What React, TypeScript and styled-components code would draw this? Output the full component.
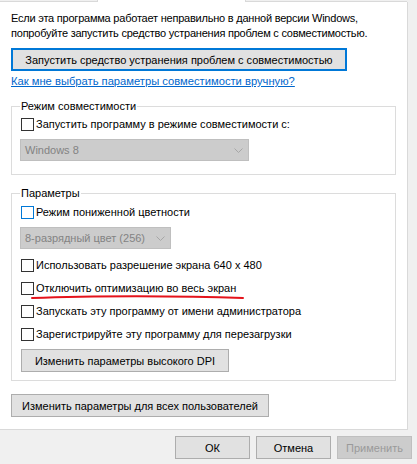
import styled, { createGlobalStyle } from "styled-components";

const Global = createGlobalStyle`
  html, body {
    margin: 0;
    padding: 0;
    background: #f0f0f0;
  }
  body {
    font-family: "Liberation Sans", "Noto Sans", sans-serif;
    font-size: 11px;
    color: #000;
    white-space: nowrap;
  }
`;

function Chevron() {
  return (
    <svg width="9" height="5" viewBox="0 0 9 5">
      <path d="M0.5 0.5 L4.5 4.5 L8.5 0.5" fill="none" stroke="#a6a6a6" strokeWidth="1" />
    </svg>
  );
}

function Check({ label, focus, marked }: { label: string; focus?: boolean; marked?: boolean }) {
  return (
    <CheckRow>
      <Box $focus={focus} />
      <CheckText>{label}</CheckText>
      {marked && (
        <RedMark width="214" height="6" viewBox="0 0 214 6">
          <path d="M1 4 C 60 1.5, 150 1.5, 212 4" fill="none" stroke="#e4131b" strokeWidth="2" strokeLinecap="round" />
        </RedMark>
      )}
    </CheckRow>
  );
}

export default function App() {
  return (
    <>
      <Global />
      <Dialog>
        <Tabs>
          <Tab $w={97} />
          <Tab $w={149} $active />
          <Tab $w={161} />
        </Tabs>
        <Panel>
          <Intro>
            Если эта программа работает неправильно в данной версии Windows,
            <br />
            попробуйте запустить средство устранения проблем с совместимостью.
          </Intro>
          <Button $default $w={336}>Запустить средство устранения проблем с совместимостью</Button>
          <HelpLink href="#">Как мне выбрать параметры совместимости вручную?</HelpLink>

          <Group $h={76} $top={10}>
            <Legend>Режим совместимости</Legend>
            <Check label="Запустить программу в режиме совместимости с:" />
            <Select $w={229}>
              Windows 8
              <Chevron />
            </Select>
          </Group>

          <Group $h={195} $top={11}>
            <Legend>Параметры</Legend>
            <Check label="Режим пониженной цветности" focus />
            <Select $w={151}>
              8-разрядный цвет (256)
              <Chevron />
            </Select>
            <Check label="Использовать разрешение экрана 640 x 480" />
            <Check label="Отключить оптимизацию во весь экран" marked />
            <Check label="Запускать эту программу от имени администратора" />
            <Check label="Зарегистрируйте эту программу для перезагрузки" />
            <Button $w={208}>Изменить параметры высокого DPI</Button>
          </Group>

          <AllUsers>
            <Button $w={258}>Изменить параметры для всех пользователей</Button>
          </AllUsers>
        </Panel>
        <Footer>
          <Button $w={75}>ОК</Button>
          <Button $w={75}>Отмена</Button>
          <Button $w={75} disabled>Применить</Button>
        </Footer>
      </Dialog>
    </>
  );
}

const Dialog = styled.div`
  width: 417px;
  height: 464px;
  display: flex;
  flex-direction: column;
  overflow: hidden;
`;

const Tabs = styled.div`
  display: flex;
  height: 2px;
`;

const Tab = styled.div<{ $w: number; $active?: boolean }>`
  width: ${(p) => p.$w}px;
  box-sizing: border-box;
  background: ${(p) => (p.$active ? "#fff" : "#f0f0f0")};
  border-bottom: ${(p) => (p.$active ? "none" : "1px solid #d9d9d9")};
  border-left: ${(p) => (p.$active ? "1px solid #d9d9d9" : "none")};
  border-right: ${(p) => (p.$active ? "1px solid #d9d9d9" : "none")};
`;

const Panel = styled.div`
  width: 408px;
  height: 428px;
  box-sizing: border-box;
  background: #fff;
  border-right: 1px solid #d9d9d9;
  border-bottom: 1px solid #d9d9d9;
  padding: 9px 12px 0 11px;
  display: flex;
  flex-direction: column;
  align-items: flex-start;
`;

const Intro = styled.p`
  margin: 0;
  line-height: 15px;
  letter-spacing: -0.22px;
`;

const Button = styled.button<{ $w: number; $default?: boolean }>`
  width: ${(p) => p.$w}px;
  height: 23px;
  box-sizing: border-box;
  margin: 0;
  padding: 0 4px;
  font: inherit;
  color: #000;
  background: #e1e1e1;
  border: ${(p) => (p.$default ? "2px solid #0078d7" : "1px solid #adadad")};
  border-radius: 0;
  text-align: center;
  white-space: nowrap;

  &:disabled {
    background: #cccccc;
    border-color: #bfbfbf;
    color: #9a9a9a;
  }

  ${Intro} + & {
    margin-top: 7px;
  }
`;

const HelpLink = styled.a`
  margin-top: 3px;
  color: #0066cc;
  line-height: 15px;
  font-size: 11.2px;
  text-decoration: underline;
`;

const Group = styled.fieldset<{ $h: number; $top: number }>`
  width: 385px;
  height: ${(p) => p.$h}px;
  box-sizing: border-box;
  margin: ${(p) => p.$top}px 0 0;
  padding: 3px 9px 0 9px;
  border: 1px solid #dcdcdc;
  display: flex;
  flex-direction: column;
  align-items: flex-start;
  gap: 8px;
  min-inline-size: 0;

  & + & {
    padding-top: 4px;
  }

  & > button {
    margin-top: -1px;
  }
`;

const Legend = styled.legend`
  padding: 0 1px;
  margin-left: -1px;
  line-height: 15px;
`;

const CheckRow = styled.div`
  position: relative;
  display: flex;
  align-items: center;
  gap: 2px;
  height: 15px;
`;

const Box = styled.span<{ $focus?: boolean }>`
  width: 13px;
  height: 13px;
  box-sizing: border-box;
  border: 1px solid ${(p) => (p.$focus ? "#0078d7" : "#333333")};
  background: #fff;
`;

const CheckText = styled.span`
  line-height: 15px;
`;

const RedMark = styled.svg`
  position: absolute;
  left: 10px;
  top: 13px;
`;

const Select = styled.div<{ $w: number }>`
  width: ${(p) => p.$w}px;
  height: 22px;
  box-sizing: border-box;
  margin: -1px 0 1px -1px;
  background: #cccccc;
  border: 1px solid #bfbfbf;
  color: #838383;
  display: flex;
  align-items: center;
  justify-content: space-between;
  padding: 0 5px 0 4px;
`;

const AllUsers = styled.div`
  margin-top: 13px;
`;

const Footer = styled.div`
  display: flex;
  justify-content: flex-end;
  gap: 6px;
  padding: 6px 5px 0;
`;
